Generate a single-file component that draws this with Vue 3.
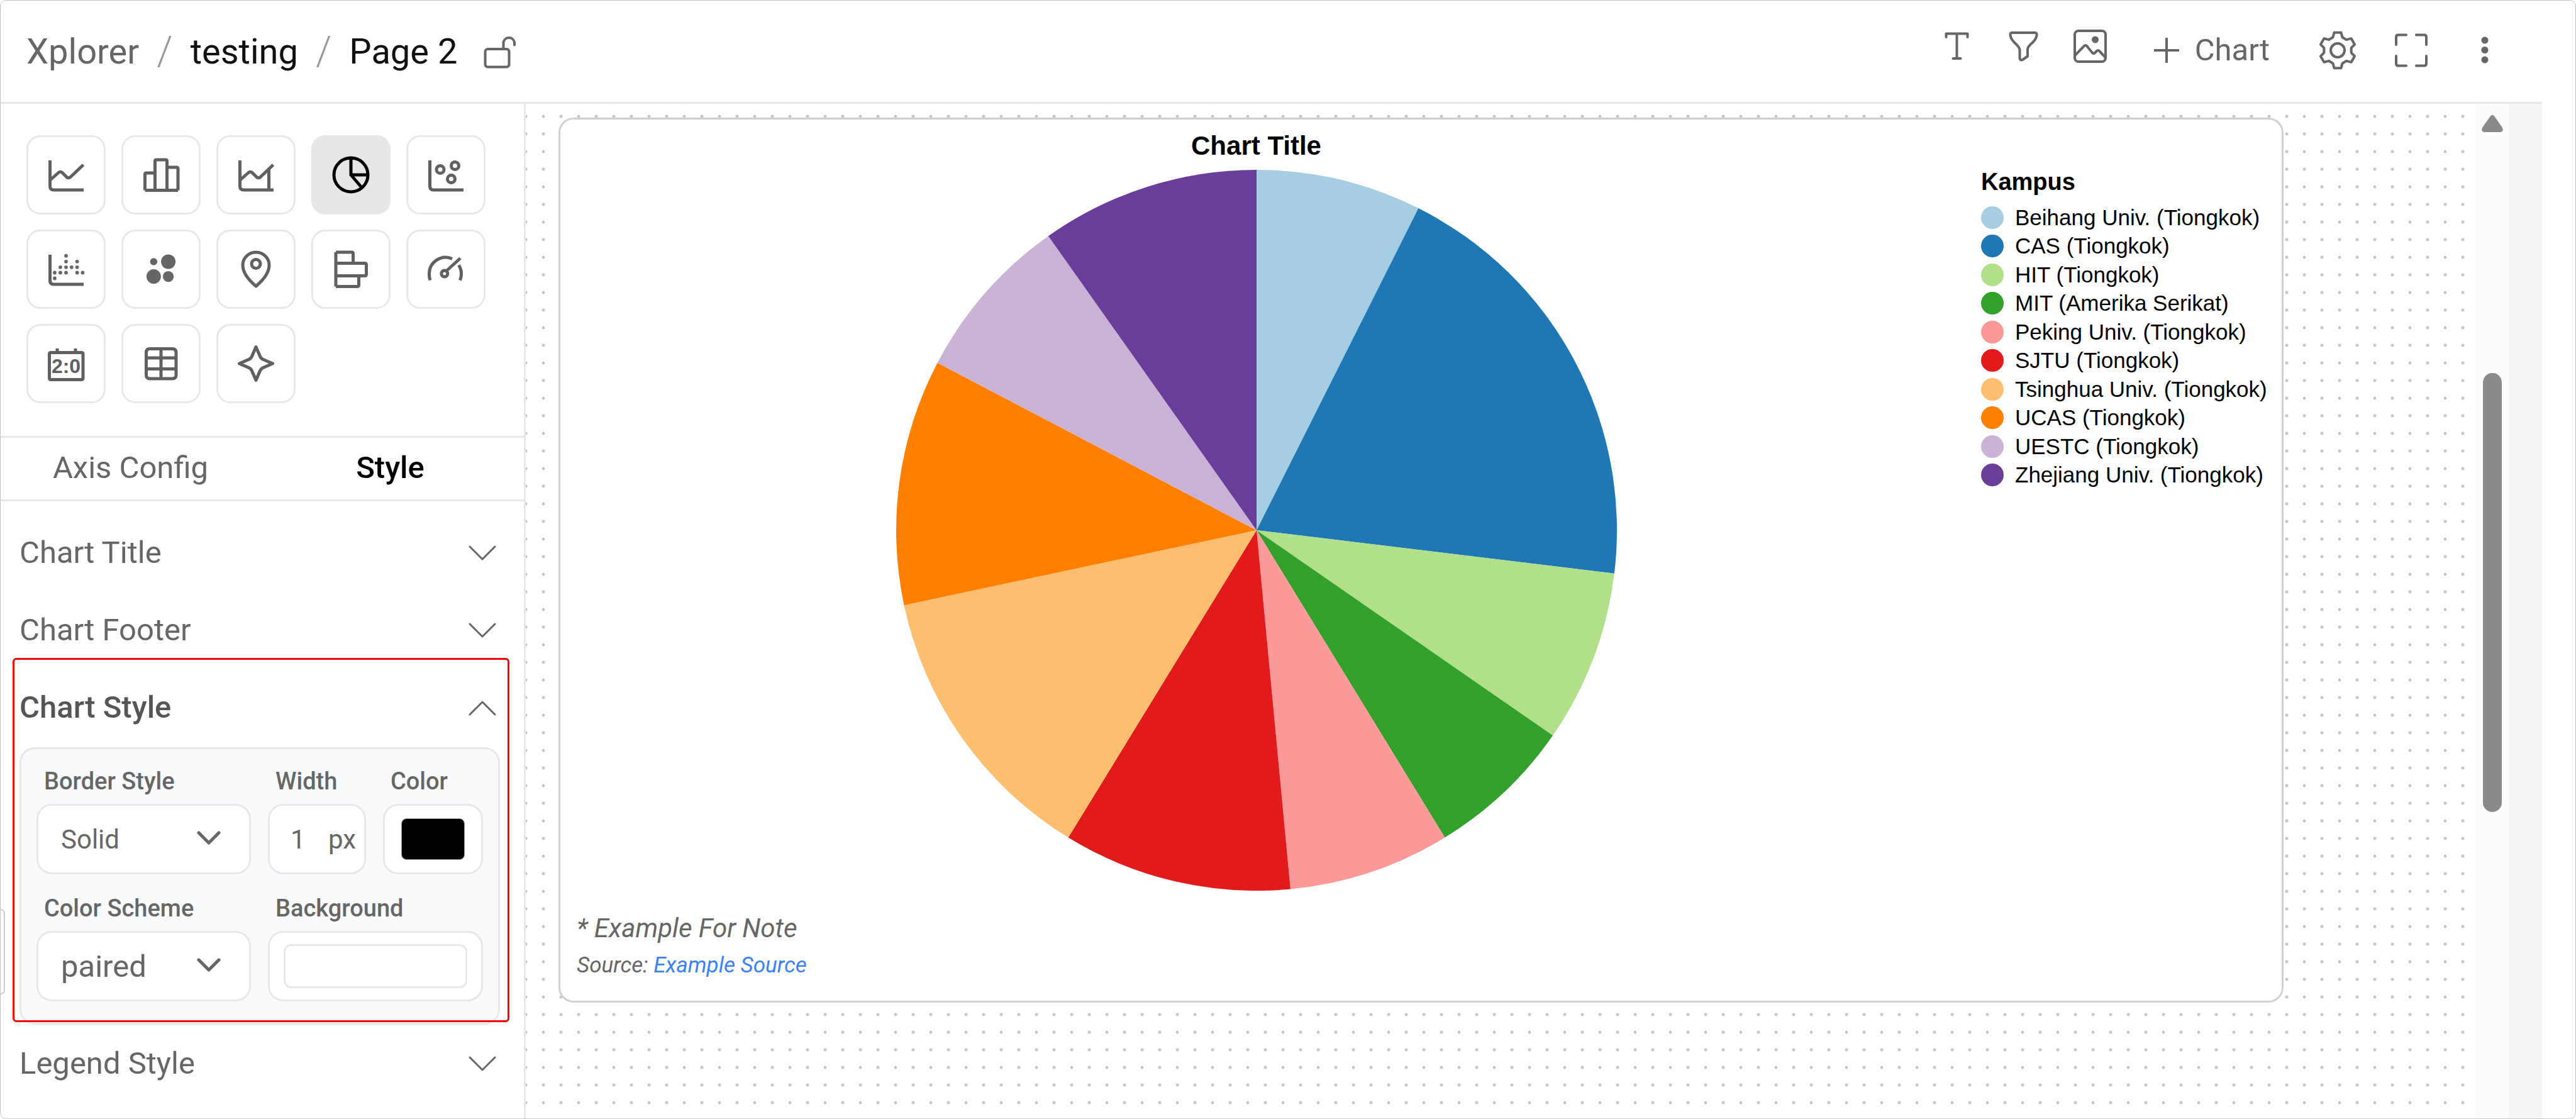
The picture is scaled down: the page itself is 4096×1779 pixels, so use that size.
<script setup>
import { ref } from 'vue'

const borderStyle = ref('Solid')
const borderWidth = ref('1')
const borderColor = ref('#000000')
const colorScheme = ref('paired')
const background = ref('#ffffff')

const axis = 'M4.5 7V48Q4.5 54 10.5 54H58'
const trend = 'M5 38L18 26.5Q21 24 24 26.5L31 33.5Q34 36 37 33.5L57.5 14'

const chartTypes = [
  { name: 'Line chart', lines: [axis, trend] },
  { name: 'Bar chart', lines: ['M4.5 54.5V29Q4.5 27 6.5 27H20.5M20.5 54.5V8Q20.5 6 22.5 6H37.5Q39.5 6 39.5 8V54.5M39.5 18H54.5Q57 18 57 20.5V54.5M4.5 54.5H57'] },
  { name: 'Area chart', lines: [axis, trend, 'M50.5 22V54'] },
  { name: 'Pie chart', active: true, lines: ['M30 3A27 27 0 1 0 30 57A27 27 0 1 0 30 3V30H57M30 30L47 50'] },
  { name: 'Scatter plot', lines: [axis], rings: [[21, 21.6, 6], [44.5, 15.5, 6], [38.5, 36.5, 6]] },
  {
    name: 'Histogram',
    lines: [axis],
    dots: [
      [12, 35.5, 2.9], [12, 44.5, 2.9], [21, 26.8, 2.9], [21, 35.5, 2.9],
      [30, 8.7, 2.9], [30, 17.8, 2.9], [30, 26.8, 2.9], [30, 35.5, 2.9],
      [38.8, 26.8, 2.9], [47.6, 17.8, 2.9], [47.6, 26.8, 2.9], [47.6, 35.5, 2.9],
      [56.4, 35.5, 2.9]
    ]
  },
  { name: 'Bubble chart', dots: [[18.4, 18, 5.8], [41.6, 18, 11.5], [18.4, 41.6, 11.5], [41.6, 41.6, 8.7]] },
  { name: 'Map', lines: ['M30 57C17 46 9 35 9 23.5A21 20.5 0 0 1 51 23.5C51 35 43 46 30 57Z'], rings: [[30, 21.5, 7]] },
  { name: 'Horizontal bar chart', lines: ['M6 3V57.5M6 3H31.5Q33.5 3 33.5 5V20M6 20.5H52Q54.5 20.5 54.5 23V38Q54.5 40.5 52 40.5H6M42.5 41V55Q42.5 57.5 40 57.5H6'] },
  { name: 'Gauge', lines: ['M5 47.5A26 26 0 0 1 3.5 37A26 26 0 0 1 40 13.5M50.5 23.5A27 27 0 0 1 52.5 47.5M31 32.5L53 12.5'], rings: [[27.8, 37, 5]] },
  { name: 'Scoreboard', lines: ['M6 12.5H54.5Q57 12.5 57 15V53Q57 55.5 54.5 55.5H6Q3.5 55.5 3.5 53V15Q3.5 12.5 6 12.5ZM16 6V12M45 6V12'], text: '2:0' },
  { name: 'Table', lines: ['M12 6.5H48Q54 6.5 54 12.5V48Q54 54 48 54H12Q6.5 54 6.5 48V12.5Q6.5 6.5 12 6.5ZM6.5 21H54M6.5 38.5H54M30 6.5V54'] },
  { name: 'Custom', lines: ['M30 3.5L36.5 18.5Q38 22 41.5 23.5L56.5 30L41.5 36.5Q38 38 36.5 41.5L30 56.5L23.5 41.5Q22 38 18.5 36.5L3.5 30L18.5 23.5Q22 22 23.5 18.5Z'] }
]

// each slice ends at this angle, in degrees clockwise from the top
const slices = [
  { label: 'Beihang Univ. (Tiongkok)', color: '#a6cee3', end: 26.7 },
  { label: 'CAS (Tiongkok)', color: '#1f78b4', end: 96.9 },
  { label: 'HIT (Tiongkok)', color: '#b2df8a', end: 124.7 },
  { label: 'MIT (Amerika Serikat)', color: '#33a02c', end: 148.5 },
  { label: 'Peking Univ. (Tiongkok)', color: '#fb9a99', end: 174.6 },
  { label: 'SJTU (Tiongkok)', color: '#e31a1c', end: 211.5 },
  { label: 'Tsinghua Univ. (Tiongkok)', color: '#fdbf6f', end: 258 },
  { label: 'UCAS (Tiongkok)', color: '#ff7f00', end: 297.7 },
  { label: 'UESTC (Tiongkok)', color: '#cab2d6', end: 324.7 },
  { label: 'Zhejiang Univ. (Tiongkok)', color: '#6a3d9a', end: 360 }
]

const polar = (cx, cy, r, deg) => {
  const a = (deg * Math.PI) / 180
  return `${(cx + r * Math.sin(a)).toFixed(2)} ${(cy - r * Math.cos(a)).toFixed(2)}`
}

const slicePath = (i) => {
  const start = i ? slices[i - 1].end : 0
  return `M573 573L${polar(573, 573, 573, start)}A573 573 0 0 1 ${polar(573, 573, 573, slices[i].end)}Z`
}

const gear = 'M' + [0, 60, 120, 180, 240, 300]
  .flatMap((t) => [[22, -20], [28.7, -11], [28.7, 11], [22, 20]].map(([r, d]) => polar(32, 32, r, t + d)))
  .join('L') + 'Z'
</script>

<template>
  <div class="app">
    <header class="topbar">
      <nav class="crumbs" aria-label="Breadcrumb">
        <a href="#" class="crumb muted">Xplorer</a>
        <span class="slash">/</span>
        <a href="#" class="crumb">testing</a>
        <span class="slash">/</span>
        <a href="#" class="crumb">Page 2</a>
        <button class="icon-btn lock" type="button" aria-label="Unlock page">
          <svg width="52" height="54" viewBox="0 0 52 54"><rect x="2.5" y="23" width="38" height="28.5" rx="4" /><path d="M31.5 23V12A9 9 0 0 1 49 12V16.5" /></svg>
        </button>
      </nav>
      <div class="tools">
        <div class="insert">
          <button class="icon-btn" type="button" aria-label="Text">
            <svg width="53" height="53" viewBox="0 0 53 53"><path d="M9.500 12V6.500H43.500V12M26.500 6.500V45M20.500 46H32.500" /></svg>
          </button>
          <button class="icon-btn" type="button" aria-label="Filter">
            <svg width="53" height="53" viewBox="0 0 53 53"><path d="M8 5H45Q48 5 47.500 9Q47 14.500 41 20.500Q33 27.500 33 31V42.500L25 48Q21 50 20.500 45V32Q20 28 12.500 21Q6 14.500 5.500 9Q5 5 8 5Z" /></svg>
          </button>
          <button class="icon-btn" type="button" aria-label="Image">
            <svg width="53" height="53" viewBox="0 0 53 53"><rect x="2" y="2" width="49" height="49" rx="6" /><path d="M2.500 41L17 26Q19 24 21 26L30 37Q32 39 34 37L37 34Q39 32 41 34L50.500 44" /><circle class="solid" cx="34.500" cy="16" r="5.500" /></svg>
          </button>
        </div>
        <button class="add-chart" type="button">
          <svg width="40" height="40" viewBox="0 0 40 40"><path d="M20 1V39M1 20H39" /></svg>
          Chart
        </button>
        <div class="actions">
          <button class="icon-btn" type="button" aria-label="Settings">
            <svg width="64" height="64" viewBox="0 0 64 64"><path :d="gear" /><circle cx="32" cy="32" r="11" /></svg>
          </button>
          <button class="icon-btn" type="button" aria-label="Full screen">
            <svg width="64" height="64" viewBox="0 0 64 64"><path d="M8 23V11Q8 7.500 11.500 7.500H24M40 7.500H52.500Q56 7.500 56 11V23M56 41V53Q56 56.500 52.500 56.500H40M24 56.500H11.500Q8 56.500 8 53V41" /></svg>
          </button>
          <button class="icon-btn" type="button" aria-label="More">
            <svg width="64" height="64" viewBox="0 0 64 64"><circle class="solid" cx="32" cy="16" r="5.500" /><circle class="solid" cx="32" cy="31.500" r="5.500" /><circle class="solid" cx="32" cy="47" r="5.500" /></svg>
          </button>
        </div>
      </div>
    </header>

    <div class="workspace">
      <aside class="sidebar">
        <div class="types">
          <button v-for="t in chartTypes" :key="t.name" type="button" class="type" :class="{ active: t.active }" :aria-label="t.name">
            <svg width="60" height="60" viewBox="0 0 60 60">
              <path v-for="d in t.lines" :key="d" :d="d" />
              <circle v-for="(c, i) in t.rings" :key="'r' + i" :cx="c[0]" :cy="c[1]" :r="c[2]" />
              <circle v-for="(c, i) in t.dots" :key="'d' + i" class="solid" :cx="c[0]" :cy="c[1]" :r="c[2]" />
              <text v-if="t.text" x="30" y="45" text-anchor="middle">{{ t.text }}</text>
            </svg>
          </button>
        </div>

        <div class="tabs" role="tablist">
          <button type="button" role="tab" class="tab">Axis Config</button>
          <button type="button" role="tab" class="tab current" aria-selected="true">Style</button>
        </div>

        <div class="sections">
          <button type="button" class="section-head">
            Chart Title
            <svg width="44" height="26" viewBox="0 0 44 26"><path d="M2 3L22 23L42 3" /></svg>
          </button>
          <button type="button" class="section-head">
            Chart Footer
            <svg width="44" height="26" viewBox="0 0 44 26"><path d="M2 3L22 23L42 3" /></svg>
          </button>
          <section class="open-section">
            <button type="button" class="section-head open" aria-expanded="true">
              Chart Style
              <svg width="44" height="26" viewBox="0 0 44 26"><path d="M2 24L22 4L42 24" /></svg>
            </button>
            <div class="panel">
              <div class="field">
                <label for="border-style">Border Style</label>
                <div class="box">
                  <select id="border-style" v-model="borderStyle"><option>Solid</option><option>Dashed</option></select>
                  <svg class="caret" width="40" height="24" viewBox="0 0 40 24"><path d="M4 3L20 19L36 3" /></svg>
                </div>
              </div>
              <div class="field">
                <label for="border-width">Width</label>
                <div class="box measure">
                  <input id="border-width" v-model="borderWidth" type="text"><span>px</span>
                </div>
              </div>
              <div class="field">
                <label for="border-color">Color</label>
                <div class="box swatch"><input id="border-color" v-model="borderColor" type="color"></div>
              </div>
              <div class="field">
                <label for="color-scheme">Color Scheme</label>
                <div class="box">
                  <select id="color-scheme" v-model="colorScheme" class="large"><option>paired</option><option>category</option></select>
                  <svg class="caret" width="40" height="24" viewBox="0 0 40 24"><path d="M4 3L20 19L36 3" /></svg>
                </div>
              </div>
              <div class="field wide">
                <label for="background">Background</label>
                <div class="box swatch pale"><input id="background" v-model="background" type="color"></div>
              </div>
            </div>
            <div class="highlight"></div>
          </section>
          <button type="button" class="section-head">
            Legend Style
            <svg width="44" height="26" viewBox="0 0 44 26"><path d="M2 3L22 23L42 3" /></svg>
          </button>
        </div>
        <div class="handle"></div>
      </aside>

      <main class="canvas">
        <article class="card">
          <div class="chart">
            <h2>Chart Title</h2>
            <svg width="1146" height="1146" viewBox="0 0 1146 1146" role="img" aria-label="Pie chart by Kampus">
              <path v-for="(s, i) in slices" :key="s.label" :d="slicePath(i)" :fill="s.color" />
            </svg>
          </div>
          <div class="legend">
            <h3>Kampus</h3>
            <ul>
              <li v-for="s in slices" :key="s.label"><i :style="{ background: s.color }"></i>{{ s.label }}</li>
            </ul>
          </div>
          <footer>
            <p class="note">* Example For Note</p>
            <p class="source">Source: <a href="#">Example Source</a></p>
          </footer>
        </article>
      </main>

      <div class="track">
        <svg width="34" height="28" viewBox="0 0 34 28"><path d="M14 2.500Q17 -1 20 2.500L33 21Q35.500 27.500 29 28H5Q-1.500 27.500 1 21Z" /></svg>
        <div class="thumb"></div>
      </div>
      <div class="gutter"></div>
    </div>
  </div>
</template>

<style>
body {
  margin: 0;
  background: #fff;
}
</style>

<style scoped>
* {
  box-sizing: border-box;
}
.app {
  min-height: 100vh;
  display: flex;
  flex-direction: column;
  padding-right: 53px;
  border: 1px solid #c4c4c4;
  border-radius: 10px;
  background: #fff;
  font-family: Roboto, "Liberation Sans", sans-serif;
  color: #666;
}
button {
  margin: 0;
  padding: 0;
  border: 0;
  background: none;
  font: inherit;
  color: inherit;
  cursor: pointer;
}
svg {
  display: block;
  flex: none;
}
.topbar svg,
.type svg,
.section-head svg,
.caret {
  fill: none;
  stroke: #666;
  stroke-width: 4;
  stroke-linecap: round;
  stroke-linejoin: round;
}
svg .solid {
  fill: #666;
  stroke: none;
}

/* top bar */
.topbar {
  height: 164px;
  padding: 0 59px 0 41px;
  display: flex;
  align-items: center;
  justify-content: space-between;
  border-bottom: 3px solid #e5e7eb;
}
.crumbs {
  display: flex;
  align-items: center;
  gap: 28px;
  font-size: 56px;
  line-height: 64px;
}
.crumb {
  color: #111;
  text-decoration: none;
}
.crumb.muted {
  color: #666;
}
.slash {
  font-size: 64px;
  font-weight: 300;
  color: #999;
}
.lock {
  margin-left: 14px;
}
.tools,
.insert,
.actions {
  display: flex;
  align-items: center;
}
.tools {
  padding-bottom: 4px;
}
.insert {
  gap: 53px;
  margin: 0 75px 12px 0;
}
.add-chart {
  display: flex;
  align-items: center;
  gap: 25px;
  margin-right: 76px;
  font-size: 49px;
  line-height: 60px;
}
.actions {
  gap: 53px;
}

/* sidebar */
.workspace {
  flex: 1;
  display: flex;
}
.sidebar {
  position: relative;
  flex: none;
  width: 835px;
  border-right: 3px solid #e5e7eb;
}
.types {
  display: grid;
  grid-template-columns: repeat(5, 126px);
  gap: 24px 25px;
  padding: 50px 0 52px 41px;
}
.type {
  height: 126px;
  display: grid;
  place-items: center;
  border: 3px solid #e5e7eb;
  border-radius: 22px;
}
.type svg {
  stroke: #606060;
  stroke-width: 5;
  stroke-linecap: butt;
}
.type text {
  fill: #606060;
  stroke: none;
  font: bold 32px "Liberation Sans", sans-serif;
}
.type.active {
  background: #e6e6e6;
  border-color: #e6e6e6;
}
.type.active svg {
  stroke: #000;
}
.tabs {
  display: grid;
  grid-template-columns: 1fr 1fr;
  height: 104px;
  padding-right: 6px;
  border: solid #e5e7eb;
  border-width: 3px 0;
  font-size: 49px;
}
.tab {
  padding-bottom: 4px;
}
.tab.current {
  color: #000;
  font-weight: 500;
}
.sections {
  padding: 20px 38px 0 30px;
}
.section-head {
  width: 100%;
  height: 123px;
  padding-right: 6px;
  display: flex;
  align-items: center;
  justify-content: space-between;
  font-size: 49px;
}
.section-head svg {
  stroke-width: 3;
}
.section-head.open {
  font-weight: 500;
  color: #555;
}
.open-section {
  position: relative;
}
.highlight {
  position: absolute;
  top: -17px;
  right: -15px;
  bottom: 4px;
  left: -11px;
  border: 3px solid #f00;
  border-radius: 6px;
  pointer-events: none;
}
.panel {
  display: grid;
  grid-template-columns: 1fr 156px 159px;
  gap: 32px 27px;
  margin-top: 2px;
  padding: 29px 24px 34px;
  border: 3px solid #e5e7eb;
  border-radius: 24px;
  background: #f9fafb;
}
.field {
  display: flex;
  flex-direction: column;
  gap: 14px;
  min-width: 0;
}
.field.wide {
  grid-column: span 2;
}
.field label {
  padding-left: 12px;
  font-size: 38px;
  line-height: 44px;
  font-weight: 500;
}
.box {
  position: relative;
  display: flex;
  align-items: center;
  height: 112px;
  border: 3px solid #e5e7eb;
  border-radius: 24px;
  background: #fff;
  font-size: 42px;
}
select {
  appearance: none;
  width: 100%;
  height: 100%;
  padding: 0 80px 0 36px;
  border: 0;
  background: none;
  font: inherit;
  color: inherit;
}
select.large {
  font-size: 49px;
}
.caret {
  position: absolute;
  right: 44px;
  top: 40px;
  stroke-width: 5;
  pointer-events: none;
}
.measure {
  padding-left: 33px;
}
.measure input {
  width: 60px;
  padding: 0;
  border: 0;
  background: none;
  font: inherit;
  color: inherit;
}
.swatch {
  padding: 0 26px;
}
.swatch.pale {
  padding: 0 22px;
}
.swatch input {
  appearance: none;
  width: 100%;
  height: 66px;
  padding: 0;
  border: 1px solid #999;
  border-radius: 8px;
  background: none;
  overflow: hidden;
}
.swatch.pale input {
  height: 70px;
  border: 3px solid #e5e7eb;
  border-radius: 12px;
}
.swatch input::-webkit-color-swatch-wrapper {
  padding: 0;
}
.swatch input::-webkit-color-swatch {
  border: 0;
}
.handle {
  position: absolute;
  left: 0;
  top: 1280px;
  width: 7px;
  height: 136px;
  border: 2px solid #ccc;
  border-left: 0;
  border-radius: 0 8px 8px 0;
}

/* canvas */
.canvas {
  flex: 1;
  min-width: 0;
  padding: 22px 305px 22px 52px;
  background: radial-gradient(circle at 14px 14px, #c6c6c6 2px, transparent 3px) -14px 6px / 28px 28px;
}
.card {
  display: grid;
  grid-template-columns: 1fr 478px;
  column-gap: 46px;
  padding: 17px 0 31px;
  border: 3px solid #d1d1d1;
  border-radius: 24px;
  background: #fff;
  color: #000;
}
.chart {
  display: flex;
  flex-direction: column;
  align-items: center;
  gap: 13px;
}
h2,
h3,
p,
ul {
  margin: 0;
  padding: 0;
}
h2 {
  font: bold 42px/50px "Liberation Sans", Arial, sans-serif;
}
.legend {
  padding-top: 60px;
  font-family: "Liberation Sans", Arial, sans-serif;
}
h3 {
  font-size: 38px;
  line-height: 44px;
}
ul {
  display: flex;
  flex-direction: column;
  height: 455px;
  margin-top: 12px;
  list-style: none;
}
li {
  flex: 1;
  display: flex;
  align-items: center;
  gap: 18px;
  font-size: 35px;
  line-height: 40px;
  white-space: nowrap;
}
li i {
  width: 36px;
  height: 36px;
  border-radius: 50%;
}
footer {
  grid-column: 1 / -1;
  padding: 32px 26px 0;
  color: #666;
  font-style: italic;
}
.note {
  font-size: 42px;
  line-height: 56px;
}
.source {
  margin-top: 6px;
  font-size: 35px;
  line-height: 50px;
}
.source a {
  color: #3b82f6;
  text-decoration: none;
}

/* scroll track */
.track {
  flex: none;
  width: 53px;
  padding: 17px 0 0 10px;
  background: #fcfcfc;
}
.track svg {
  fill: #8a8a8a;
}
.thumb {
  width: 30px;
  height: 698px;
  margin: 383px 0 0 2px;
  border-radius: 15px;
  background: #8a8a8a;
}
.gutter {
  flex: none;
  width: 53px;
  background: #f5f5f5;
}
</style>
